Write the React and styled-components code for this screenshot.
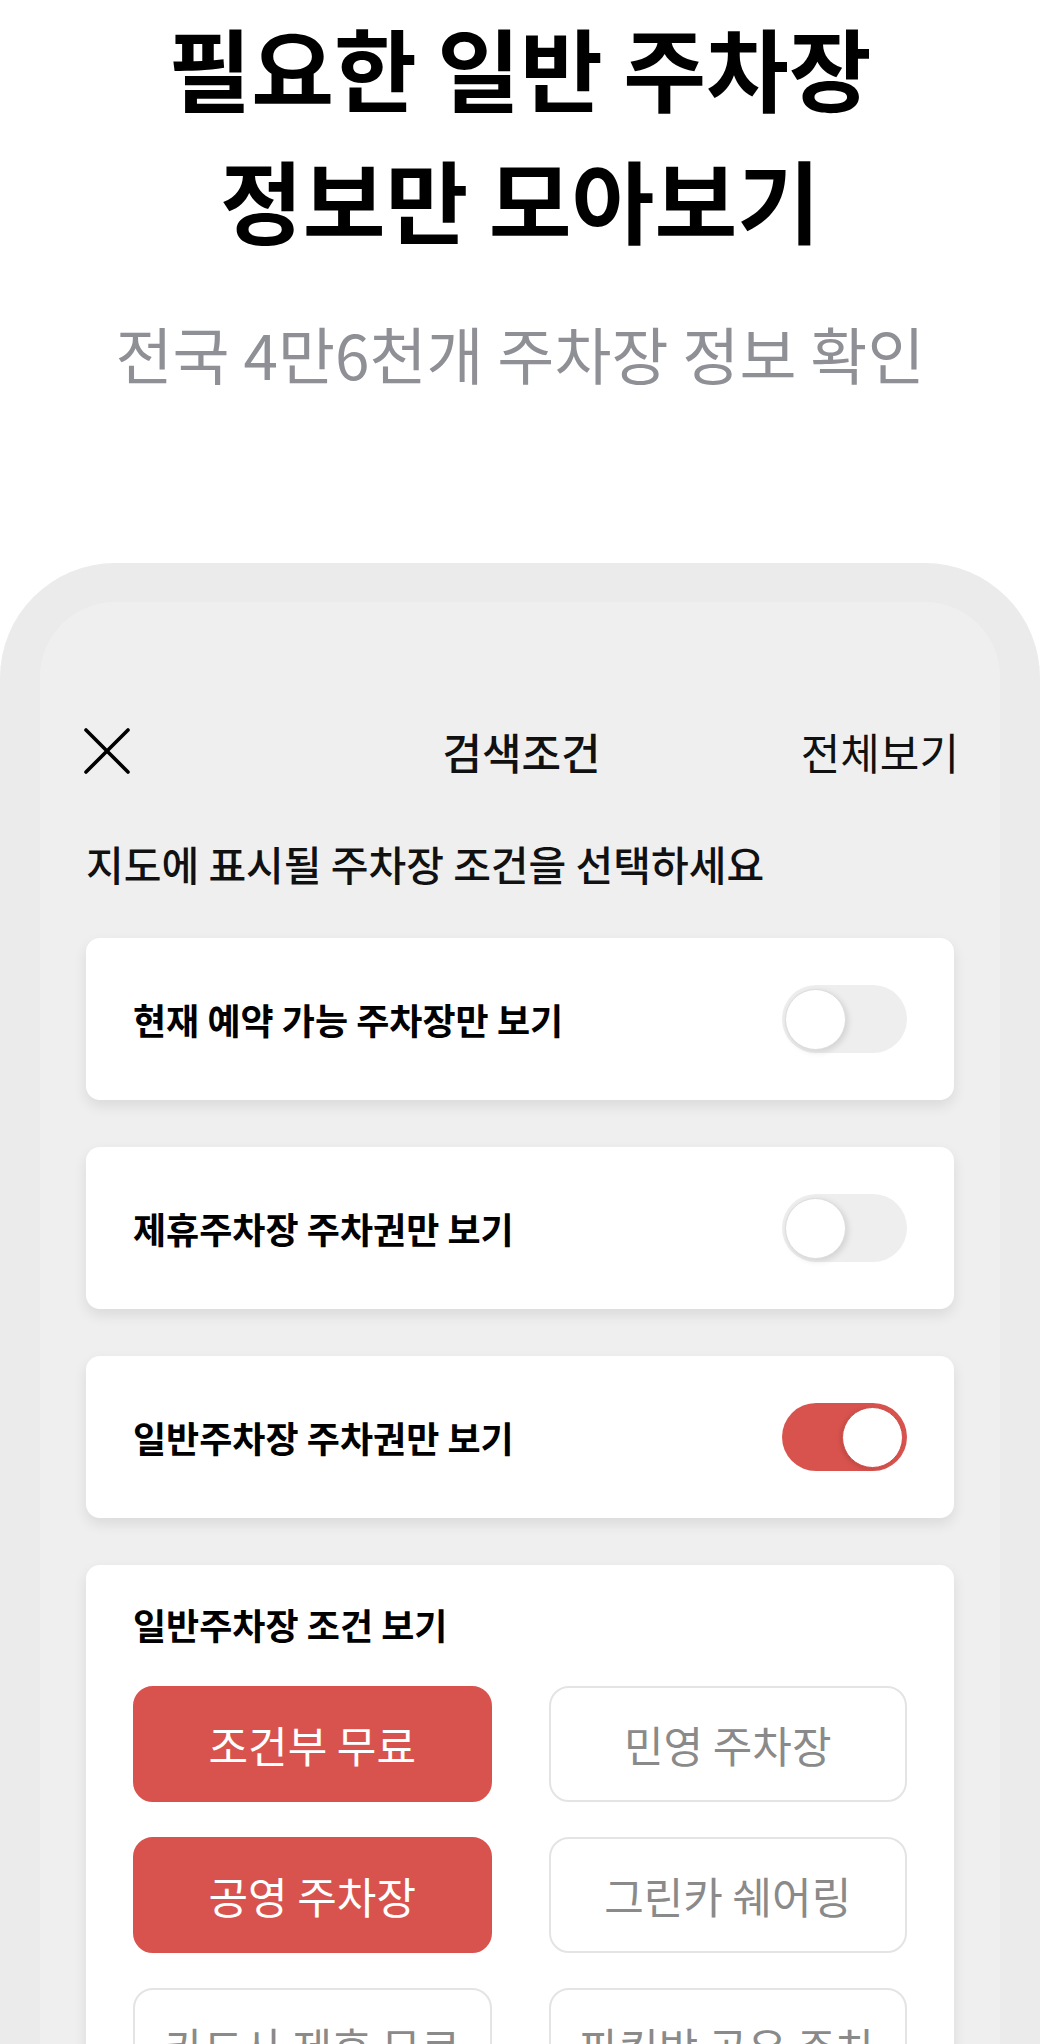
import React from "react";
import styled, { createGlobalStyle } from "styled-components";

const GlobalStyle = createGlobalStyle`
  html, body {
    margin: 0;
    padding: 0;
    background: #ffffff;
    font-family: "Noto Sans CJK KR", "Noto Sans", sans-serif;
    color: #111111;
  }
  * {
    box-sizing: border-box;
  }
`;

const Page = styled.div`
  width: 1040px;
  height: 2044px;
  overflow: hidden;
  display: flex;
  flex-direction: column;
  align-items: center;
`;

const Title = styled.h1`
  margin: 0;
  font-size: 90px;
  line-height: 132px;
  font-weight: 700;
  text-align: center;
  color: #000000;
`;

const Subtitle = styled.p`
  margin: 49px 0 0 0;
  font-size: 62px;
  line-height: 80px;
  font-weight: 400;
  color: #8e9096;
  text-align: center;
`;

const PhoneFrame = styled.div`
  margin-top: 170px;
  width: 100%;
  flex: 1;
  background: #ebebeb;
  border-radius: 115px 115px 0 0;
  padding: 39px 40px 0 40px;
  display: flex;
`;

const Screen = styled.div`
  flex: 1;
  background: #efefef;
  border-radius: 75px 75px 0 0;
  padding: 118px 46px 0 46px;
  display: flex;
  flex-direction: column;
`;

const Header = styled.div`
  display: grid;
  grid-template-columns: 1fr auto 1fr;
  align-items: center;
  height: 60px;
  margin: 0 -5px 0 -2px;
`;

const CloseButton = styled.button`
  justify-self: start;
  width: 46px;
  height: 46px;
  padding: 0;
  border: none;
  background: none;
  display: flex;
  align-items: center;
  justify-content: center;
`;

const HeaderTitle = styled.div`
  font-size: 43px;
  font-weight: 500;
  color: #111111;
`;

const HeaderLink = styled.div`
  justify-self: end;
  font-size: 43px;
  font-weight: 400;
  color: #111111;
`;

const Guide = styled.p`
  margin: 55px 0 47px 0;
  font-size: 41px;
  line-height: 56px;
  font-weight: 500;
  color: #111111;
`;

const CardList = styled.div`
  display: flex;
  flex-direction: column;
  gap: 47px;
`;

const Card = styled.div`
  background: #ffffff;
  border-radius: 14px;
  box-shadow: 0 6px 14px rgba(0, 0, 0, 0.09);
  padding: ${(p) => (p.$section ? "37px 47px 60px 47px" : "0 47px")};
  height: ${(p) => (p.$section ? "auto" : "162px")};
  display: flex;
  flex-direction: ${(p) => (p.$section ? "column" : "row")};
  align-items: ${(p) => (p.$section ? "stretch" : "center")};
  justify-content: space-between;
`;

const Label = styled.span`
  font-size: 36px;
  line-height: 44px;
  font-weight: 700;
  color: #000000;
`;

const Track = styled.div`
  position: relative;
  width: 125px;
  height: 68px;
  border-radius: 34px;
  background: ${(p) => (p.$on ? "#d9534e" : "#eeeeee")};
  flex-shrink: 0;
`;

const Knob = styled.div`
  position: absolute;
  top: 4px;
  left: ${(p) => (p.$on ? "60px" : "3px")};
  width: 61px;
  height: 61px;
  border-radius: 50%;
  background: #ffffff;
  border: 1px solid ${(p) => (p.$on ? "#d24a45" : "#dcdcdc")};
  box-shadow: ${(p) =>
    p.$on ? "-2px 1px 4px rgba(0,0,0,0.12)" : "2px 2px 6px rgba(0,0,0,0.12)"};
`;

const OptionGrid = styled.div`
  margin-top: 40px;
  display: grid;
  grid-template-columns: 1fr 1fr;
  column-gap: 57px;
  row-gap: 35px;
`;

const Option = styled.button`
  height: 116px;
  border-radius: 20px;
  font-family: inherit;
  font-size: 43px;
  font-weight: 400;
  white-space: nowrap;
  overflow: hidden;
  background: ${(p) => (p.$active ? "#d9534e" : "#ffffff")};
  color: ${(p) => (p.$active ? "#ffffff" : "#8a8a8a")};
  border: 2px solid ${(p) => (p.$active ? "#d9534e" : "#e4e4e4")};
`;

const CloseIcon = () => (
  <svg width="46" height="46" viewBox="0 0 46 46" fill="none">
    <path
      d="M2 2 L44 44 M44 2 L2 44"
      stroke="#000"
      strokeWidth="3.6"
      strokeLinecap="round"
    />
  </svg>
);

const Toggle = ({ on }) => (
  <Track $on={on}>
    <Knob $on={on} />
  </Track>
);

const toggles = [
  { label: "현재 예약 가능 주차장만 보기", on: false },
  { label: "제휴주차장 주차권만 보기", on: false },
  { label: "일반주차장 주차권만 보기", on: true },
];

const options = [
  { label: "조건부 무료", active: true },
  { label: "민영 주차장", active: false },
  { label: "공영 주차장", active: true },
  { label: "그린카 쉐어링", active: false },
  { label: "카드사 제휴 무료", active: false },
  { label: "파킹박 공유 주차", active: false },
];

const App = () => {
  return (
    <>
      <GlobalStyle />
      <Page>
        <Title>
          필요한 일반 주차장
          <br />
          정보만 모아보기
        </Title>
        <Subtitle>전국 4만6천개 주차장 정보 확인</Subtitle>
        <PhoneFrame>
          <Screen>
            <Header>
              <CloseButton>
                <CloseIcon />
              </CloseButton>
              <HeaderTitle>검색조건</HeaderTitle>
              <HeaderLink>전체보기</HeaderLink>
            </Header>
            <Guide>지도에 표시될 주차장 조건을 선택하세요</Guide>
            <CardList>
              {toggles.map((t) => (
                <Card key={t.label}>
                  <Label>{t.label}</Label>
                  <Toggle on={t.on} />
                </Card>
              ))}
              <Card $section>
                <Label>일반주차장 조건 보기</Label>
                <OptionGrid>
                  {options.map((o) => (
                    <Option key={o.label} $active={o.active}>
                      {o.label}
                    </Option>
                  ))}
                </OptionGrid>
              </Card>
            </CardList>
          </Screen>
        </PhoneFrame>
      </Page>
    </>
  );
};

export default App;
